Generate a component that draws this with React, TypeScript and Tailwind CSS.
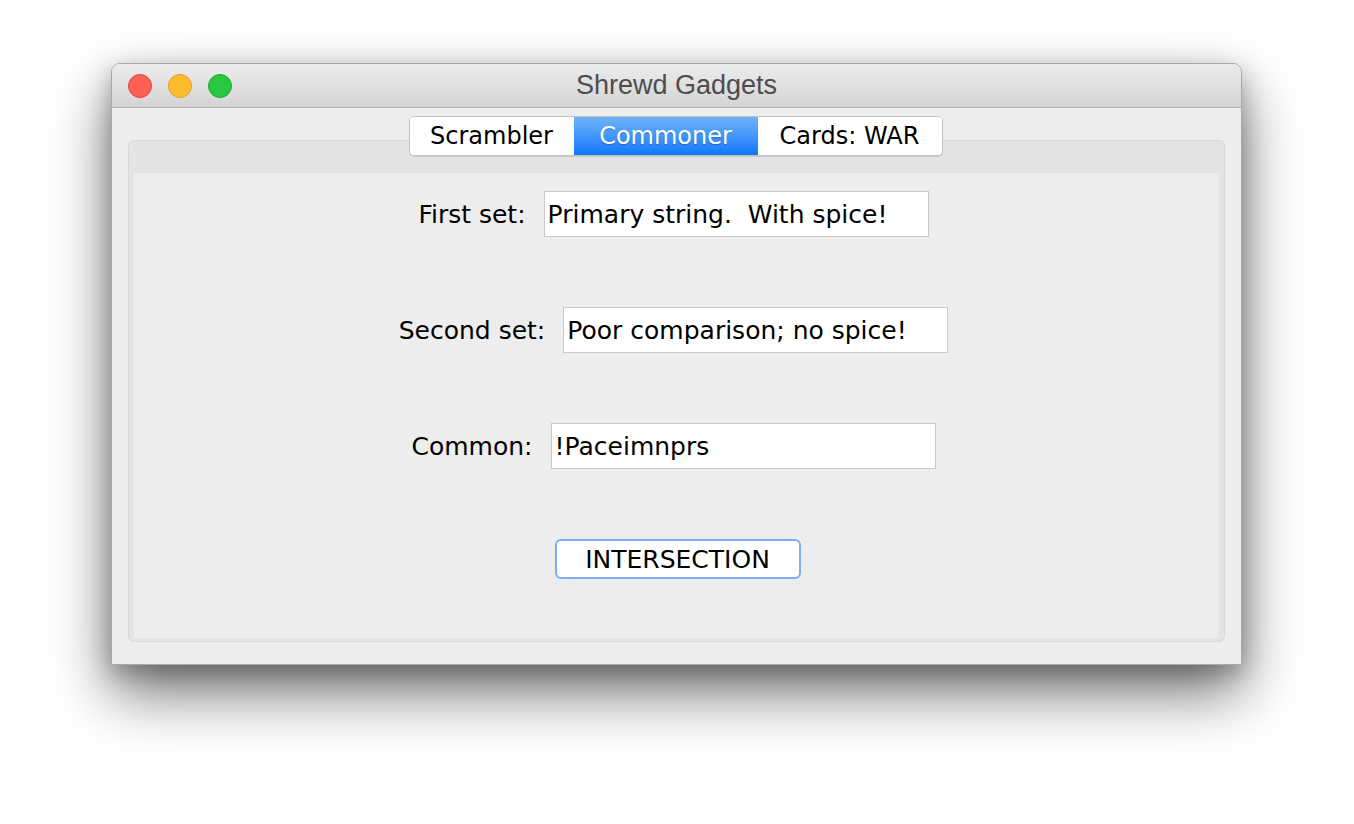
import React from 'react';

const uiFont = { fontFamily: '"DejaVu Sans", "Noto Sans", sans-serif' };

function Field({ label, value }: { label: string; value: string }) {
  return (
    <div className="flex items-center justify-center gap-[18px]">
      <span className="text-[25px] text-black leading-none">{label}</span>
      <div className="w-[385px] h-[46px] bg-white border border-[#c9c9c9] flex items-center pl-[3px] text-[25px] text-black leading-none whitespace-pre">
        {value}
      </div>
    </div>
  );
}

export default function App() {
  const tabs = ['Scrambler', 'Commoner', 'Cards: WAR'];
  const widths = ['w-[164px]', 'w-[184px]', 'w-[184px]'];

  return (
    <div className="w-[1354px] h-[824px] bg-white pt-[63px] pl-[111px]" style={uiFont}>
      {/* Window */}
      <div className="w-[1131px] h-[602px] rounded-t-[9px] bg-[#ededed] border border-[#a9a9a9] shadow-[0_28px_60px_rgba(0,0,0,0.55),0_8px_24px_rgba(0,0,0,0.25)] flex flex-col overflow-hidden">
        {/* Title bar */}
        <div className="relative h-[44px] shrink-0 bg-gradient-to-b from-[#ececec] to-[#d4d4d4] border-b border-[#b3b3b3] flex items-center justify-center">
          <div className="absolute left-[16px] top-[10px] flex gap-[16px]">
            <div className="w-[24px] h-[24px] rounded-full bg-[#fe5f57] border border-[#e0443e]" />
            <div className="w-[24px] h-[24px] rounded-full bg-[#febc2e] border border-[#dea123]" />
            <div className="w-[24px] h-[24px] rounded-full bg-[#28c840] border border-[#1aab29]" />
          </div>
          <span className="text-[27px] text-[#4d4d4d] leading-none" style={{ fontFamily: '"Liberation Sans", Arial, sans-serif' }}>
            Shrewd Gadgets
          </span>
        </div>

        {/* Body */}
        <div className="flex-1 flex flex-col px-[16px] pt-[8px]">
          {/* Tabs */}
          <div className="relative z-10 flex justify-center pr-[2px]">
            <div className="flex h-[40px] rounded-[5px] border border-[#c2c2c2] bg-white shadow-[0_1px_1px_rgba(0,0,0,0.12)] overflow-hidden">
              {tabs.map((t, i) => (
                <div
                  key={t}
                  className={
                    i === 1
                      ? `${widths[i]} flex items-center justify-center text-[24px] text-white bg-gradient-to-b from-[#6cb3fa] to-[#0a76f8] [text-shadow:0_1px_1px_rgba(0,0,0,0.25)]`
                      : `${widths[i]} flex items-center justify-center text-[24px] text-black bg-white`
                  }
                >
                  {t}
                </div>
              ))}
            </div>
          </div>

          {/* Tab panel */}
          <div className="mt-[-16px] h-[502px] rounded-[6px] border border-[#d8d8d8] bg-[#e4e4e4] pt-[32px] px-[5px] pb-[3px] flex flex-col">
            <div className="flex-1 bg-[#ededed] flex flex-col items-center pt-[18px] gap-[70px] pr-[6px]">
              <Field label="First set:" value="Primary string.  With spice!" />
              <Field label="Second set:" value="Poor comparison; no spice!" />
              <Field label="Common:" value="!Paceimnprs" />
              <button className="ml-[8px] w-[246px] h-[40px] rounded-[6px] bg-white border-2 border-[#7eaef0] text-[25px] text-black leading-none flex items-center justify-center">
                INTERSECTION
              </button>
            </div>
          </div>
        </div>
      </div>
    </div>
  );
}
